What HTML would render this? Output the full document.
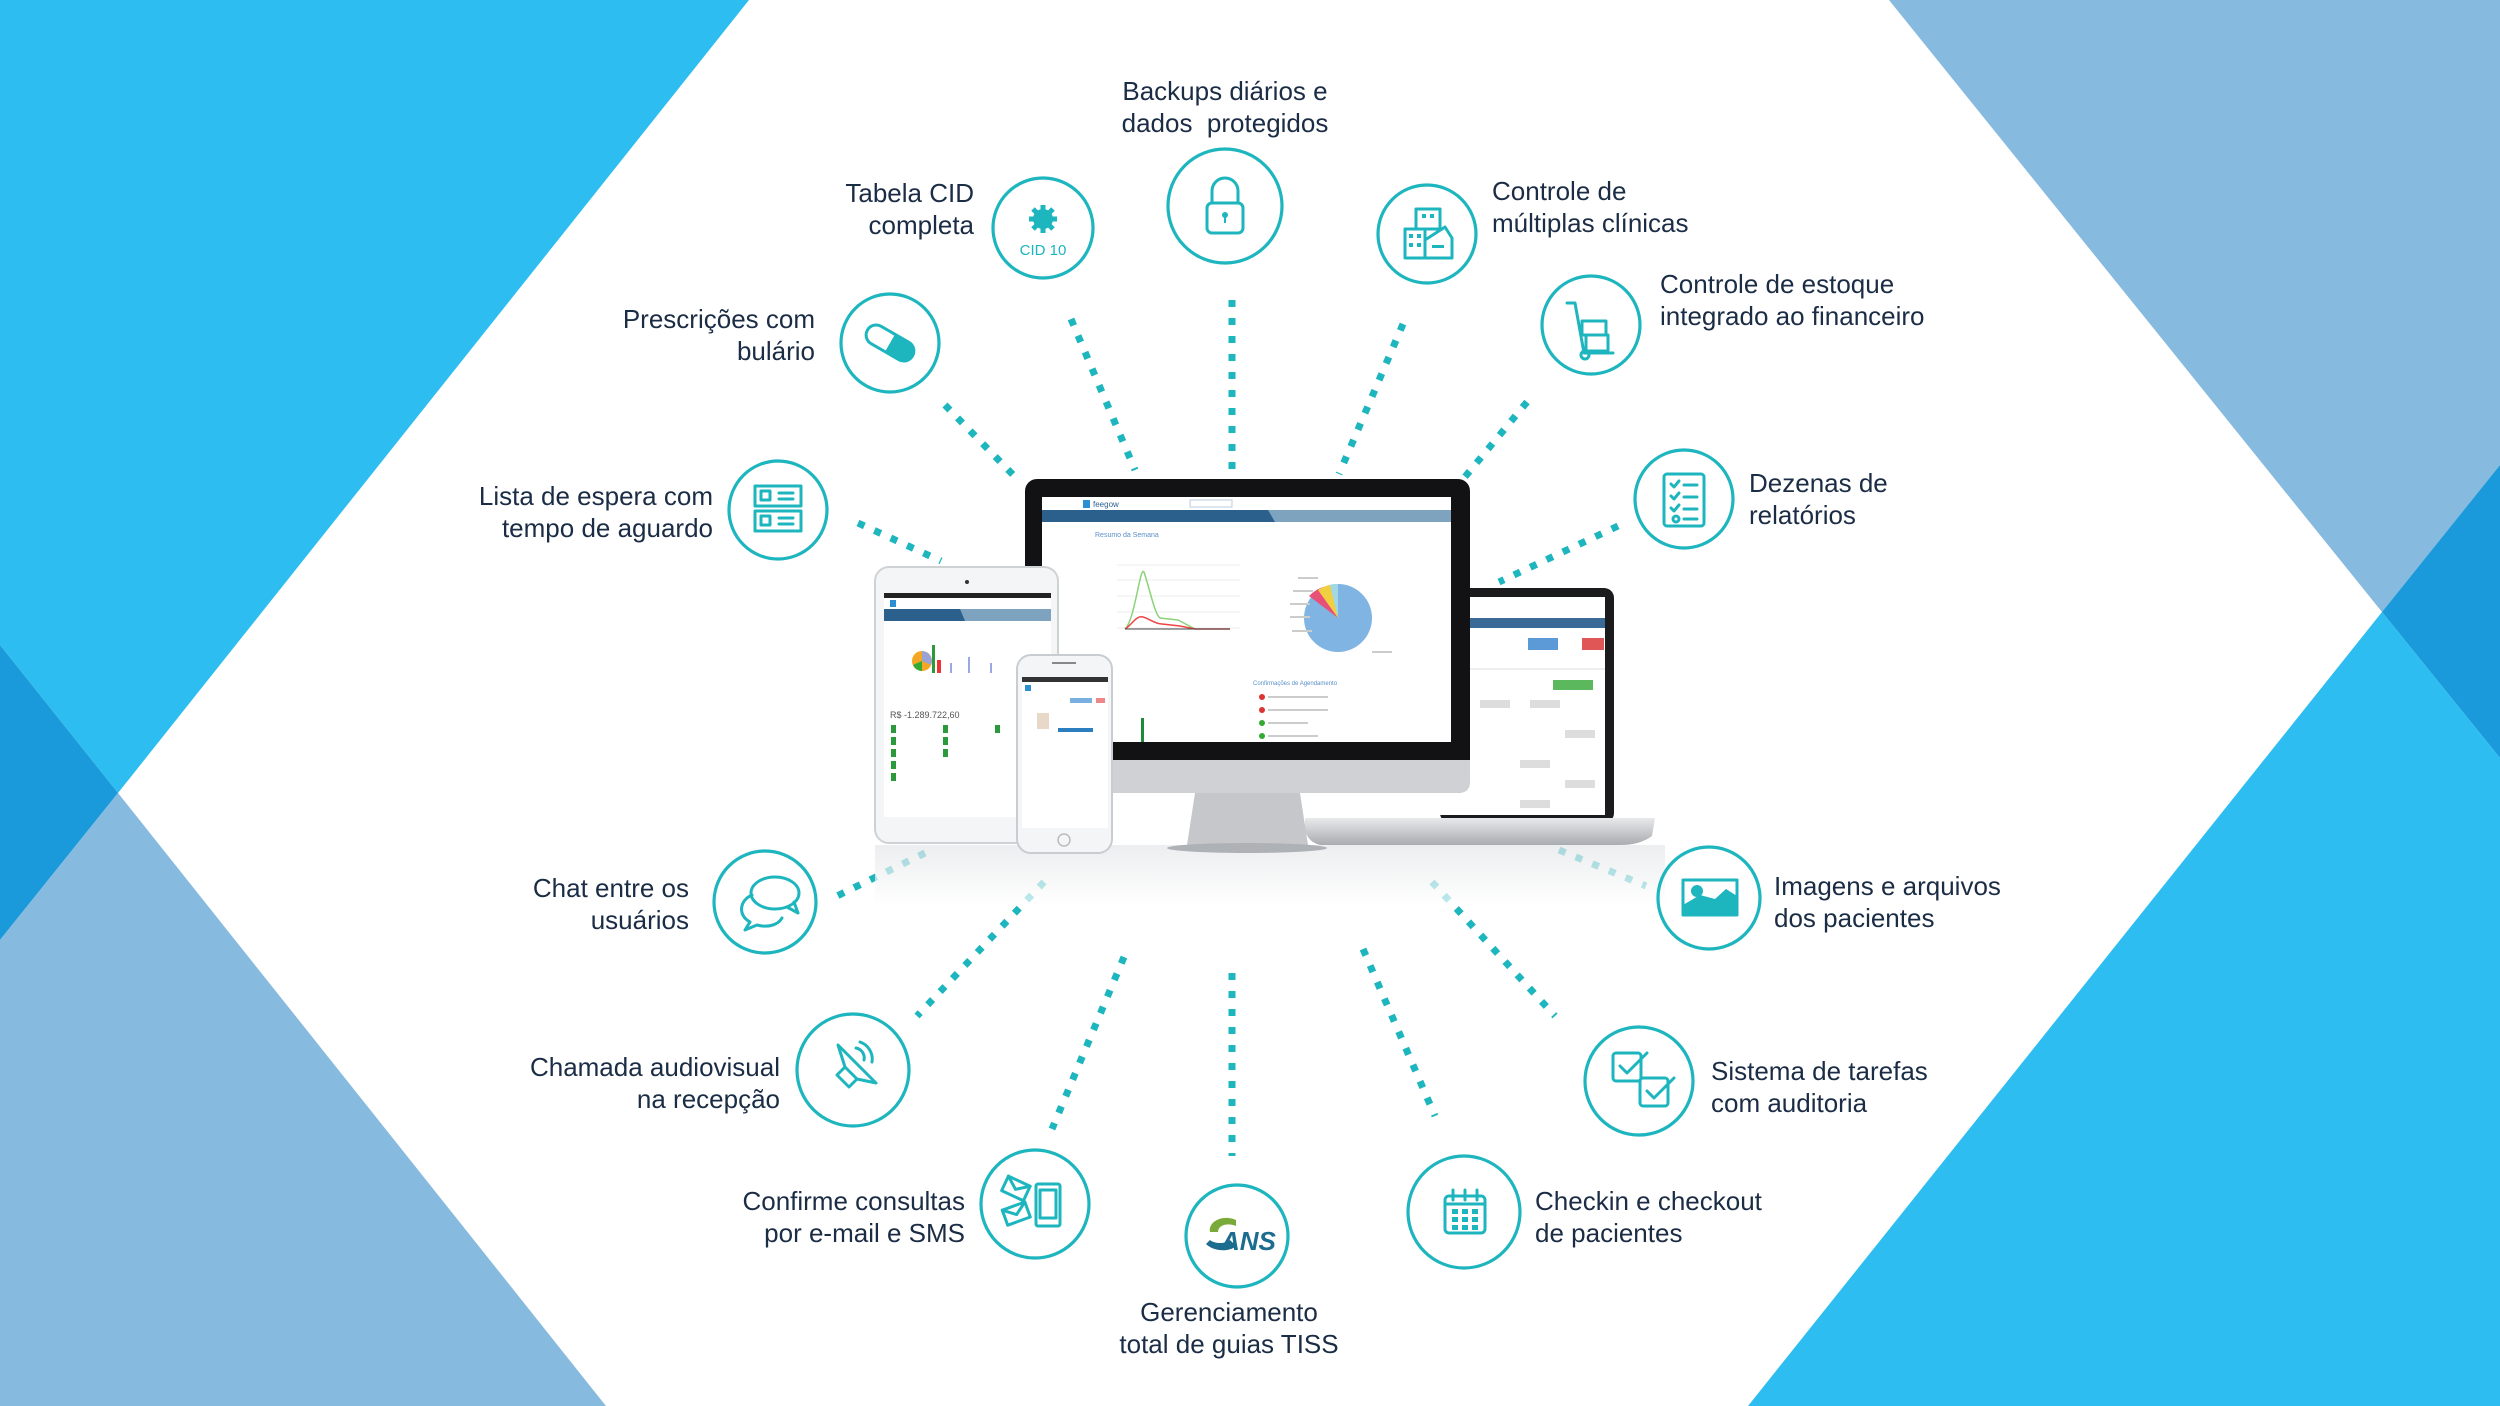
<!DOCTYPE html>
<html><head><meta charset="utf-8"><style>
html,body{margin:0;padding:0;width:2500px;height:1406px;overflow:hidden;background:#fff}
.t{position:absolute;font-family:"Liberation Sans",sans-serif;font-size:26px;line-height:32px;color:#1b2c45;white-space:nowrap}
.r{text-align:right}.c{text-align:center}
svg{position:absolute;left:0;top:0}
</style></head><body>
<svg width="2500" height="1406" viewBox="0 0 2500 1406">
<polygon points="0,0 749,0 118,793 0,645" fill="#2ebdf1"/>
<polygon points="0,645 118,793 0,940" fill="#1a9ada"/>
<polygon points="0,940 118,793 606,1406 0,1406" fill="#87badf"/>
<polygon points="1889,0 2500,0 2500,465 2382,612" fill="#87badf"/>
<polygon points="2500,465 2382,612 2500,758" fill="#1a9ada"/>
<polygon points="2382,612 2500,758 2500,1406 1748,1406" fill="#2ebdf1"/>

<g stroke="#1db5be" stroke-width="7" stroke-dasharray="7 11" fill="none">
<line x1="1071" y1="319" x2="1135" y2="470"/>
<line x1="1232" y1="300" x2="1232" y2="475"/>
<line x1="1403" y1="324" x2="1339" y2="474"/>
<line x1="1527" y1="402" x2="1464" y2="478"/>
<line x1="945" y1="405" x2="1020" y2="482"/>
<line x1="1618" y1="526" x2="1499" y2="582"/>
<line x1="858" y1="523" x2="941" y2="561"/>
<line x1="925" y1="853" x2="837" y2="896"/>
<line x1="1559" y1="850" x2="1646" y2="886"/>
<line x1="1044" y1="882" x2="917" y2="1016"/>
<line x1="1432" y1="882" x2="1555" y2="1016"/>
<line x1="1124" y1="957" x2="1052" y2="1129"/>
<line x1="1232" y1="973" x2="1232" y2="1156"/>
<line x1="1363" y1="949" x2="1435" y2="1116"/>
</g>

<defs>
<linearGradient id="sil" x1="0" y1="0" x2="0" y2="1"><stop offset="0" stop-color="#e8e9eb"/><stop offset="1" stop-color="#a9acb0"/></linearGradient>
<linearGradient id="refl" x1="0" y1="0" x2="0" y2="1"><stop offset="0" stop-color="#e4e6e8"/><stop offset="1" stop-color="#fff"/></linearGradient>
</defs>
<rect x="875" y="845" width="790" height="60" fill="url(#refl)" opacity="0.7"/>
<rect x="1440" y="588" width="174" height="235" rx="10" fill="#1b1b1d"/>
<rect x="1440" y="597" width="165" height="218" fill="#fff"/>
<rect x="1440" y="618" width="165" height="10" fill="#3a6a95"/>
<rect x="1528" y="638" width="30" height="12" fill="#5b9ad6"/>
<rect x="1582" y="638" width="22" height="12" fill="#e05555"/>
<rect x="1553" y="680" width="40" height="10" fill="#5cb85c"/>
<rect x="1440" y="668" width="165" height="2" fill="#eee"/>
<g fill="#ddd"><rect x="1480" y="700" width="30" height="8"/><rect x="1530" y="700" width="30" height="8"/><rect x="1565" y="730" width="30" height="8"/><rect x="1520" y="760" width="30" height="8"/><rect x="1565" y="780" width="30" height="8"/><rect x="1520" y="800" width="30" height="8"/></g>
<path d="M1305,818 L1655,818 L1652,836 Q1640,845 1620,845 L1320,845 Q1308,842 1305,830 Z" fill="url(#sil)"/>
<rect x="1025" y="479" width="445" height="314" rx="12" fill="#121214"/>
<path d="M1025,760 L1470,760 L1470,782 Q1470,793 1458,793 L1037,793 Q1025,793 1025,782 Z" fill="#cfd1d4"/>
<path d="M1195,793 L1300,793 L1308,845 L1187,845 Z" fill="#c5c7ca"/>
<ellipse cx="1247" cy="848" rx="80" ry="5" fill="#aeb1b5"/>
<rect x="1042" y="497" width="409" height="245" fill="#fff"/>
<rect x="1042" y="510" width="409" height="12" fill="#7ea3bf"/>
<path d="M1042,510 L1268,510 L1275,522 L1042,522 Z" fill="#2b5f8c"/>
<rect x="1083" y="500" width="7" height="8" fill="#2b8fd1"/>
<text x="1093" y="507" font-family="Liberation Sans" font-size="8" fill="#2b5f8c">feegow</text>
<rect x="1190" y="500" width="42" height="7" fill="none" stroke="#bcd" stroke-width="1"/>
<text x="1095" y="537" font-family="Liberation Sans" font-size="7" fill="#5b8fc8">Resumo da Semana</text>
<g stroke="#eee" stroke-width="1"><line x1="1117" y1="565" x2="1240" y2="565"/><line x1="1117" y1="580" x2="1240" y2="580"/><line x1="1117" y1="596" x2="1240" y2="596"/><line x1="1117" y1="612" x2="1240" y2="612"/><line x1="1117" y1="628" x2="1240" y2="628"/></g>
<path d="M1125,629 C1135,620 1140,565 1144,572 C1150,590 1155,615 1160,618 L1178,620 L1195,629" stroke="#8cd27a" stroke-width="1.5" fill="none"/>
<path d="M1125,629 C1132,625 1136,615 1143,617 C1150,619 1155,624 1162,624 L1180,626 L1195,629 L1230,629" stroke="#e44" stroke-width="1.5" fill="none"/>
<line x1="1125" y1="629" x2="1230" y2="629" stroke="#444" stroke-width="1"/>
<circle cx="1338" cy="618" r="34" fill="#80b4e2"/>
<path d="M1338,618 L1309,596 A34,34 0 0 1 1327,586 Z" fill="#e8507a"/>
<path d="M1338,618 L1318,590 A34,34 0 0 1 1332,584.5 Z" fill="#f0d040"/>
<path d="M1338,618 L1330,584.8 A34,34 0 0 1 1338,584 Z" fill="#a0d8e8"/>
<g fill="#ccc"><rect x="1298" y="577" width="20" height="2"/><rect x="1293" y="590" width="20" height="2"/><rect x="1290" y="603" width="20" height="2"/><rect x="1290" y="616" width="20" height="2"/><rect x="1292" y="630" width="20" height="2"/><rect x="1372" y="651" width="20" height="2"/></g>
<text x="1253" y="685" font-family="Liberation Sans" font-size="6" fill="#5b8fc8">Confirmações de Agendamento</text>
<g fill="#d33"><circle cx="1262" cy="697" r="3"/><circle cx="1262" cy="710" r="3"/></g>
<g fill="#3a3"><circle cx="1262" cy="723" r="3"/><circle cx="1262" cy="736" r="3"/></g>
<g fill="#ccc"><rect x="1268" y="696" width="60" height="2"/><rect x="1268" y="709" width="60" height="2"/><rect x="1268" y="722" width="40" height="2"/><rect x="1268" y="735" width="50" height="2"/></g>
<rect x="1141" y="718" width="3" height="24" fill="#1e8a3a"/>
<rect x="875" y="567" width="183" height="276" rx="14" fill="#f4f5f6" stroke="#cfd2d5" stroke-width="2"/>
<circle cx="967" cy="582" r="2" fill="#333"/>
<rect x="884" y="593" width="167" height="224" fill="#fff"/>
<rect x="884" y="593" width="167" height="5" fill="#222"/>
<rect x="884" y="609" width="167" height="12" fill="#7ea3bf"/>
<path d="M884,609 L960,609 L965,621 L884,621 Z" fill="#2b5f8c"/>
<rect x="890" y="600" width="6" height="7" fill="#2b8fd1"/>
<circle cx="922" cy="661" r="10" fill="#f5a623"/><path d="M922,661 L922,651 A10,10 0 0 1 931,665 Z" fill="#9aa3d6"/><path d="M922,661 L913,665 A10,10 0 0 0 922,671 Z" fill="#3a3"/>
<rect x="932" y="645" width="3" height="28" fill="#2a9a3a"/><rect x="937" y="660" width="4" height="13" fill="#e33"/>
<g fill="#99a8e0"><rect x="950" y="663" width="2" height="10"/><rect x="968" y="657" width="2" height="16"/><rect x="990" y="663" width="2" height="10"/></g>
<text x="890" y="718" font-family="Liberation Sans" font-size="9" fill="#555">R$ -1.289.722,60</text>
<g fill="#2a9a3a"><rect x="891" y="725" width="5" height="8"/><rect x="891" y="737" width="5" height="8"/><rect x="891" y="749" width="5" height="8"/><rect x="891" y="761" width="5" height="8"/><rect x="891" y="773" width="5" height="8"/><rect x="943" y="725" width="5" height="8"/><rect x="943" y="737" width="5" height="8"/><rect x="943" y="749" width="5" height="8"/><rect x="995" y="725" width="5" height="8"/></g>
<rect x="1017" y="655" width="95" height="198" rx="14" fill="#f4f5f6" stroke="#c9ccd0" stroke-width="2"/>
<rect x="1022" y="677" width="86" height="151" fill="#fff"/>
<rect x="1022" y="677" width="86" height="5" fill="#333"/>
<rect x="1025" y="685" width="6" height="6" fill="#2b8fd1"/>
<rect x="1070" y="698" width="22" height="5" fill="#7ab0e0"/><rect x="1096" y="698" width="9" height="5" fill="#e88"/>
<rect x="1037" y="713" width="12" height="16" fill="#e8d8c8"/>
<rect x="1058" y="728" width="35" height="4" fill="#2b7fc0"/>
<circle cx="1064" cy="840" r="6" fill="none" stroke="#bbb" stroke-width="1.5"/>
<rect x="1052" y="662" width="24" height="2" fill="#888"/>
</svg>

<svg width="2500" height="1406" viewBox="0 0 2500 1406">
<g fill="none" stroke="#1db5be" stroke-width="3.2">
<circle cx="1225" cy="206" r="57"/>
<circle cx="1043" cy="228" r="50"/>
<circle cx="1427" cy="234" r="49"/>
<circle cx="1591" cy="325" r="49"/>
<circle cx="890" cy="343" r="49"/>
<circle cx="1684" cy="499" r="49"/>
<circle cx="778" cy="510" r="49"/>
<circle cx="765" cy="902" r="51"/>
<circle cx="1709" cy="898" r="51"/>
<circle cx="853" cy="1070" r="56"/>
<circle cx="1639" cy="1081" r="54"/>
<circle cx="1035" cy="1204" r="54"/>
<circle cx="1237" cy="1236" r="51"/>
<circle cx="1464" cy="1212" r="56"/>
</g>
<g fill="none" stroke="#1db5be" stroke-width="3" stroke-linejoin="round" stroke-linecap="round">
<path d="M1212,203 V191 a13,13 0 0 1 26,0 V203"/>
<rect x="1207" y="203" width="36" height="30" rx="5"/>
<rect x="1405" y="229" width="20" height="29"/><rect x="1416" y="209" width="24" height="20"/>
<path d="M1425,258 V240 L1445,227 L1452,238 V258 Z"/>
<path d="M1567,303 H1575 L1584,353 H1613"/><rect x="1582" y="321" width="24" height="14"/><rect x="1586" y="335" width="22" height="16"/>
<circle cx="1585" cy="355" r="4"/>
<rect x="1664" y="474" width="40" height="52" rx="3"/>
<path d="M1671,484 l3,3 l5,-6 M1671,496 l3,3 l5,-6 M1671,508 l3,3 l5,-6 M1684,485 H1697 M1684,497 H1697 M1684,509 H1697 M1684,519 H1697"/>
<circle cx="1676" cy="519" r="3"/>
<rect x="755" y="486" width="46" height="20"/><rect x="755" y="511" width="46" height="20"/>
<rect x="761" y="491" width="9" height="9"/><rect x="761" y="516" width="9" height="9"/>
<path d="M779,493 H793 M779,499 H793 M779,518 H793 M779,524 H793"/>
<g transform="rotate(30 890 343)"><rect x="864" y="333" width="52" height="20" rx="10"/></g>
<ellipse cx="775" cy="893" rx="24" ry="16"/>
<path d="M794,902 L798,913 L787,907"/>
<path d="M752,895 C740,900 737,915 750,922 L745,930 L757,925 C768,928 778,925 782,918"/>
<rect x="1683" y="880" width="54" height="35"/>
<path d="M837,1075 L849,1087 L857,1079 L845,1067 Z M845,1067 L838,1045 L876,1083 L857,1079"/>
<path d="M856,1048 a10,10 0 0 1 8,12 M860,1042 a18,18 0 0 1 12,20"/>
<rect x="1613" y="1053" width="28" height="28" rx="3"/><rect x="1640" y="1078" width="28" height="28" rx="3"/>
<path d="M1620,1066 l7,7 l20,-20 M1647,1091 l7,7 l20,-20"/>
<rect x="1036" y="1184" width="24" height="42" rx="2"/><rect x="1040" y="1190" width="16" height="28"/>
<g transform="rotate(25 1015 1188)"><rect x="1004" y="1180" width="24" height="16"/><path d="M1004,1180 l12,9 l12,-9"/></g>
<g transform="rotate(-20 1015 1213)"><rect x="1004" y="1206" width="24" height="16"/><path d="M1004,1206 l12,9 l12,-9"/></g>
<rect x="1445" y="1196" width="40" height="37" rx="4"/><path d="M1445,1204 H1485 M1453,1190 V1200 M1465,1190 V1200 M1477,1190 V1200"/>
</g>
<g fill="#1db5be">
<circle cx="1043" cy="219" r="10"/>
<g stroke="#1db5be" stroke-width="5"><line x1="1043" y1="205" x2="1043" y2="233"/><line x1="1029" y1="219" x2="1057" y2="219"/><line x1="1033" y1="209" x2="1053" y2="229"/><line x1="1053" y1="209" x2="1033" y2="229"/></g>
<text x="1043" y="255" font-family="Liberation Sans" font-size="15" text-anchor="middle">CID 10</text>
<circle cx="1225" cy="215" r="3"/><rect x="1224" y="216" width="2" height="7"/>
<g transform="rotate(30 890 343)"><path d="M890,333 H906 a10,10 0 0 1 0,20 H890 Z"/></g>
<g><rect x="1409" y="234" width="4" height="4"/><rect x="1417" y="234" width="4" height="4"/><rect x="1409" y="243" width="4" height="4"/><rect x="1417" y="243" width="4" height="4"/><rect x="1422" y="214" width="4" height="4"/><rect x="1430" y="214" width="4" height="4"/><rect x="1432" y="245" width="12" height="3"/></g>
<circle cx="1697" cy="891" r="6"/><path d="M1683,915 V905 L1700,895 L1715,899 L1726,889 L1737,896 V915 Z"/>
<g><rect x="1452" y="1209" width="6" height="5"/><rect x="1462" y="1209" width="6" height="5"/><rect x="1472" y="1209" width="6" height="5"/><rect x="1452" y="1217" width="6" height="5"/><rect x="1462" y="1217" width="6" height="5"/><rect x="1472" y="1217" width="6" height="5"/><rect x="1452" y="1225" width="6" height="5"/><rect x="1462" y="1225" width="6" height="5"/><rect x="1472" y="1225" width="6" height="5"/></g>
</g>
<path d="M1236,1220 C1222,1214 1208,1222 1210,1232 L1218,1232 C1218,1226 1226,1222 1236,1226 Z" fill="#7aab3a"/>
<path d="M1206,1244 C1214,1252 1230,1252 1236,1246 L1230,1240 C1225,1244 1215,1244 1210,1240 Z" fill="#1b6c8f"/>
<text x="1221" y="1250" font-family="Liberation Sans" font-size="26" font-weight="bold" font-style="italic" fill="#1b6c8f">ANS</text>
</svg>

<div class="t c" style="left:1075px;width:300px;top:75px">Backups diários e<br>dados&nbsp; protegidos</div>
<div class="t r" style="right:1526px;top:177px">Tabela CID<br>completa</div>
<div class="t" style="left:1492px;top:175px">Controle de<br>múltiplas clínicas</div>
<div class="t" style="left:1660px;top:268px">Controle de estoque<br>integrado ao financeiro</div>
<div class="t r" style="right:1685px;top:303px">Prescrições com<br>bulário</div>
<div class="t" style="left:1749px;top:467px">Dezenas de<br>relatórios</div>
<div class="t r" style="right:1787px;top:480px">Lista de espera com<br>tempo de aguardo</div>
<div class="t r" style="right:1811px;top:872px">Chat entre os<br>usuários</div>
<div class="t" style="left:1774px;top:870px">Imagens e arquivos<br>dos pacientes</div>
<div class="t r" style="right:1720px;top:1051px">Chamada audiovisual<br>na recepção</div>
<div class="t" style="left:1711px;top:1055px">Sistema de tarefas<br>com auditoria</div>
<div class="t r" style="right:1535px;top:1185px">Confirme consultas<br>por e-mail e SMS</div>
<div class="t c" style="left:1079px;width:300px;top:1296px">Gerenciamento<br>total de guias TISS</div>
<div class="t" style="left:1535px;top:1185px">Checkin e checkout<br>de pacientes</div>
</body></html>
